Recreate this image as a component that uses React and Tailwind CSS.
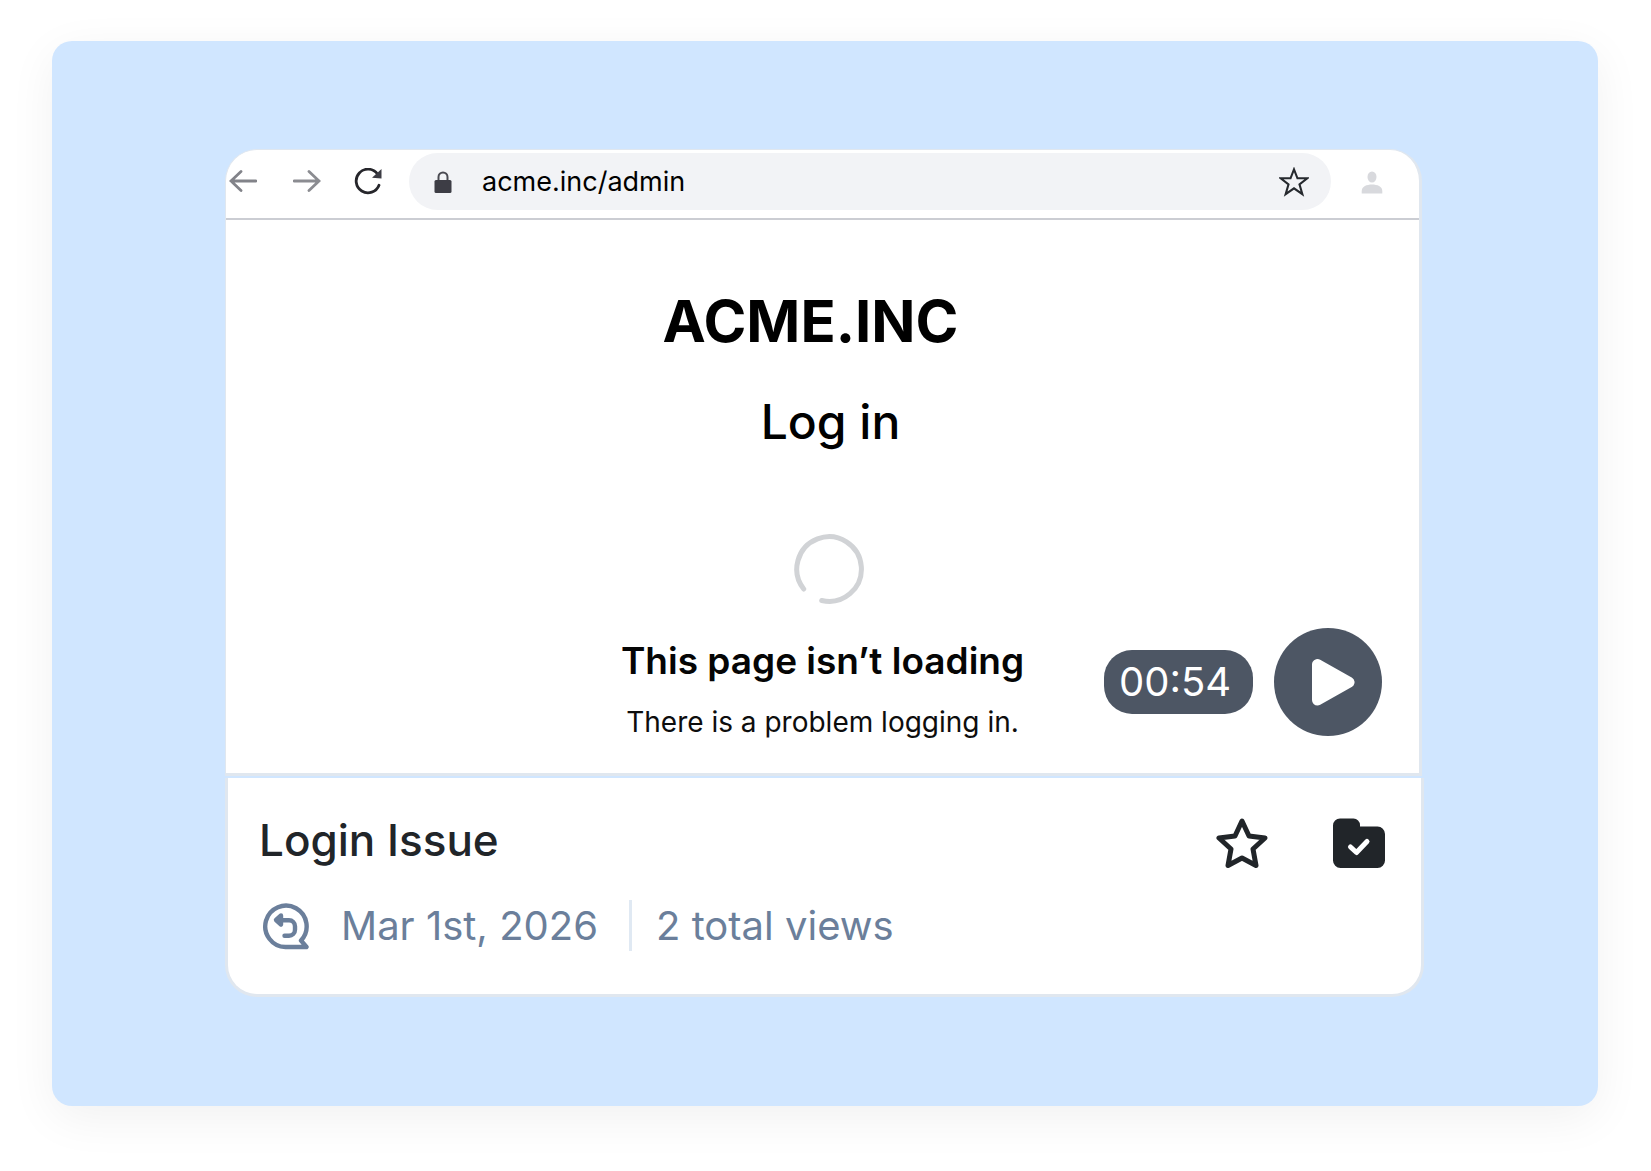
/**
 * App.jsx
 *
 * Recording preview card: a video thumbnail (mock browser window) with its
 * duration and play button, and the title / date / view count underneath.
 */

const STAR =
  "M26 3 L33 18 L49 20 L37 31 L40 47.500 L26 40 L12 47.500 L15 31 L3 20 L19 18 Z"

function BrowserBar() {
  return (
    <div className="flex items-center h-[70px] border-b-2 border-[#cbcdd3] pb-[5px]">
      <button type="button" aria-label="Back" className="ml-[3px] shrink-0">
        <svg viewBox="0 0 28 24" className="w-7 h-6" fill="none" stroke="#828389" strokeWidth="2.8" strokeLinecap="round">
          <path d="M27 11H2M12 1.500L2 11l10 9.500" />
        </svg>
      </button>
      <button type="button" aria-label="Forward" className="ml-9 shrink-0">
        <svg viewBox="0 0 28 24" className="w-7 h-6" fill="none" stroke="#8b8c91" strokeWidth="2.8" strokeLinecap="round">
          <path d="M1 11h25M16 1.500l10 9.500-10 9.500" />
        </svg>
      </button>
      <button type="button" aria-label="Reload" className="ml-[33px] shrink-0">
        <svg viewBox="0 0 28 28" className="w-7 h-7" fill="none" stroke="#26262b" strokeWidth="2.8">
          <path d="M25 17.200A11.800 11.800 0 1 1 23.500 6" strokeLinecap="round" />
          <path d="M27.500 1v9.500l-9.500-.8z" fill="#3c3c44" stroke="none" />
        </svg>
      </button>

      {/* Address field */}
      <div className="flex items-center flex-1 min-w-0 h-[57px] ml-[27px] pl-6 pr-[22px] rounded-full bg-[#f2f3f6]">
        <svg viewBox="0 0 20 24" className="w-5 h-6 shrink-0" aria-hidden="true">
          <path d="M5.500 11V7a4.500 4.500 0 0 1 9 0v4" fill="none" stroke="#4a4a52" strokeWidth="2" />
          <rect x="1.500" y="10" width="17" height="13" rx="1.500" fill="#3d3d45" />
        </svg>
        <input
          type="text"
          aria-label="Address"
          defaultValue="acme.inc/admin"
          className="flex-1 min-w-0 ml-[29px] bg-transparent text-[27px] leading-9 text-black outline-none"
        />
        <button type="button" aria-label="Bookmark this page" className="shrink-0">
          <svg viewBox="0 0 52 52" className="w-[30px] h-[30px]" fill="none" stroke="#26292e" strokeWidth="3.6">
            <path d="M26 4l6 15.500h17L35.500 30l5 17L26 37l-14.500 10 5-17L3 19.500h17z" />
          </svg>
        </button>
      </div>

      <button type="button" aria-label="Profile" className="ml-[30px] mr-[36px] shrink-0">
        <svg viewBox="0 0 22 24" className="w-[22px] h-6" fill="#d8d9dd">
          <ellipse cx="11" cy="7" rx="4.500" ry="5.500" />
          <path d="M.7 23.500v-2.500c0-4.500 5-6.500 10.300-6.500s10.300 2 10.300 6.500v2.500z" />
        </svg>
      </button>
    </div>
  )
}

function Thumbnail() {
  return (
    <div className="relative mr-0.5 rounded-t-[32px] border border-r-[3px] border-b-[3px] border-[#e0e7ef] bg-white overflow-hidden">
      <BrowserBar />

      <div className="flex flex-col items-center pt-[67px] pb-8">
        <h1 className="pr-6 text-[58px] leading-[68px] font-bold text-black">ACME.INC</h1>
        <h2 className="mt-[33px] pl-4 text-5xl leading-[68px] font-medium text-black">Log in</h2>
        <div className="pl-3 mt-[78px]">
          <svg viewBox="0 0 70 70" className="w-[70px] h-[70px]" fill="none" aria-hidden="true">
            <path d="M9.700 55A32.300 32.300 0 1 1 27.700 66.500" stroke="#d1d3d6" strokeWidth="5" strokeLinecap="round" />
          </svg>
        </div>
        <p className="mt-[31px] text-[37px] leading-[52px] font-semibold text-[#050505]">This page isn’t loading</p>
        <p className="mt-4 text-[28px] leading-[38px] text-[#0d0d0d]">There is a problem logging in.</p>
      </div>

      {/* Duration + play, over the recording */}
      <div className="absolute right-[37px] bottom-[37px] flex items-center gap-[21px]">
        <time className="w-[149px] pl-[15px] rounded-[28px] bg-[#4d5664] text-[40px] leading-[64px] text-white">
          00:54
        </time>
        <button
          type="button"
          aria-label="Play recording"
          className="flex items-center justify-center w-[108px] h-[108px] rounded-full bg-[#4d5664]"
        >
          <svg viewBox="0 0 108 108" className="w-[108px] h-[108px]">
            <path d="M43.500 36.500v35.500L75 54.200z" fill="#fff" stroke="#fff" strokeWidth="11" strokeLinejoin="round" />
          </svg>
        </button>
      </div>
    </div>
  )
}

function Details() {
  return (
    <div className="mt-0.5 rounded-b-[32px] border-[3px] border-t-0 border-[#e0e7ef] bg-white pl-[31px] pr-9 pt-8 pb-[43px]">
      <div className="flex items-start justify-between">
        <h3 className="text-[44px] leading-[60px] font-medium text-[#212529]">Login Issue</h3>
        <div className="flex items-center gap-[65px] pt-2">
          <button type="button" aria-label="Add to favorites">
            <svg viewBox="0 0 52 52" className="w-[52px] h-[52px]" fill="none" stroke="#212529" strokeWidth="5" strokeLinejoin="round">
              <path d={STAR} />
            </svg>
          </button>
          <button type="button" aria-label="Saved to folder">
            <svg viewBox="0 0 52 52" className="w-[52px] h-[52px]">
              <path
                d="M7 .5h13.500a6.500 6.500 0 0 1 6.500 6.500V8.500h17.500A7.500 7.500 0 0 1 52 16v26.500a7.500 7.500 0 0 1-7.500 7.500h-37A7.500 7.500 0 0 1 0 42.500V7.500a7 7 0 0 1 7-7z"
                fill="#212529"
              />
              <path d="M17.500 29l6 5.500 10.500-11" fill="none" stroke="#fff" strokeWidth="5" strokeLinecap="round" strokeLinejoin="round" />
            </svg>
          </button>
        </div>
      </div>

      <div className="flex items-center mt-[30px] text-[40px] leading-[51px] text-[#6b7f9b]">
        <svg viewBox="0 0 48 48" className="w-12 h-12 ml-0.5 mr-8 shrink-0" fill="none" stroke="#6b7f9b" strokeWidth="4.400" strokeLinecap="round" strokeLinejoin="round" aria-hidden="true">
          <path d="M24.500 45A20.700 20.700 0 1 1 40 38.500L45.500 45z" />
          <path d="M18 18.300h10a6 6 0 0 1 6 6v3.500a6 6 0 0 1-6 6h-4.500" />
          <path d="M20 13.500L15 18l5 4.500z" fill="#6b7f9b" />
        </svg>
        <span>Mar 1st, 2026</span>
        <span className="ml-[31px] pl-6 border-l-[3px] border-[#e0e9f3]">2 total views</span>
      </div>
    </div>
  )
}

export default function App() {
  return (
    <main className="pl-[52px] pr-[53px] pt-[41px] pb-[65px] bg-white font-['Inter',sans-serif]">
      <div className="rounded-[20px] bg-[#d0e6ff] pl-[173px] pr-[174px] pt-[108px] pb-[109px] shadow-[0_12px_48px_rgba(0,0,0,0.06)]">
        <Thumbnail />
        <Details />
      </div>
    </main>
  )
}
